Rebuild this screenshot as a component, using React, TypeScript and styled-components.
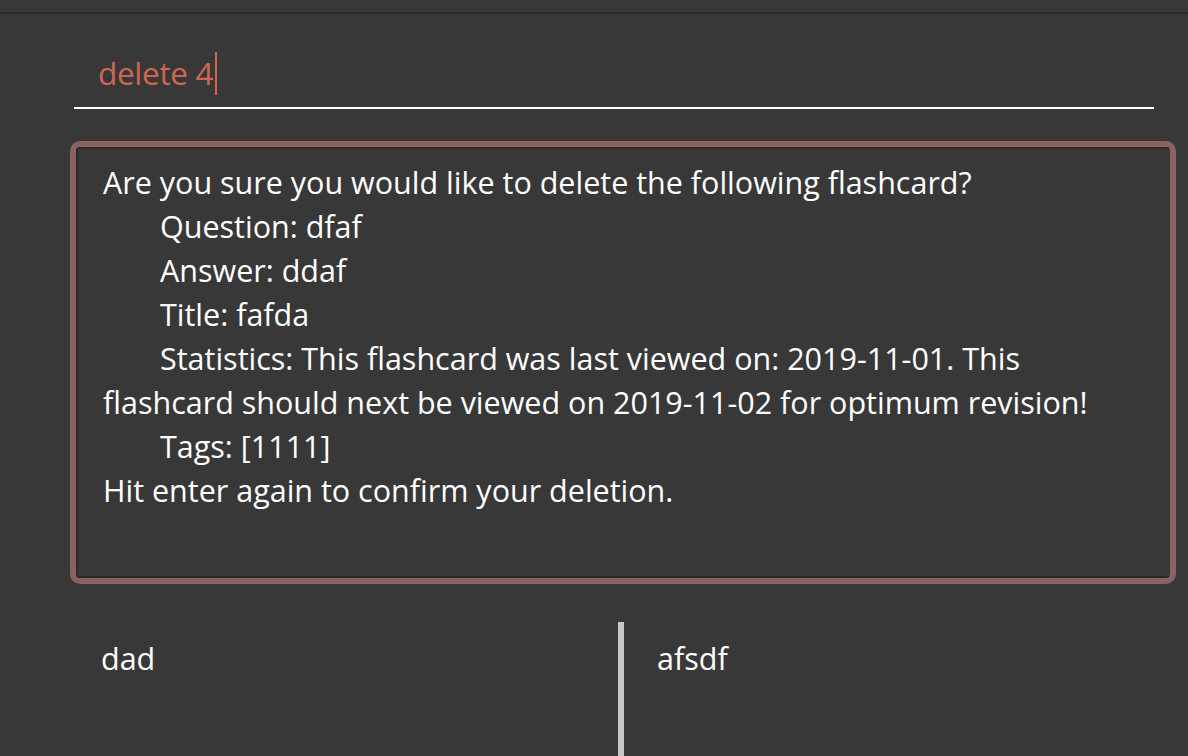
import React from "react";
import styled, { createGlobalStyle } from "styled-components";

const Global = createGlobalStyle`
  html, body { margin: 0; padding: 0; background: #383838; }
  body { font-family: "Open Sans", "Noto Sans", sans-serif; color: #ffffff; overflow: hidden; }
  #root { width: 1188px; height: 756px; }
`;

const Page = styled.div`
  width: 1188px;
  height: 756px;
  background: #383838;
  display: flex;
  flex-direction: column;
  overflow: hidden;
`;

const TopStrip = styled.div`
  height: 12px;
  border-bottom: 2px solid #2a2a2a;
  flex: none;
`;

const CommandRow = styled.div`
  margin: 0 34px 0 74px;
  height: 95px;
  border-bottom: 2px solid #ffffff;
  display: flex;
  align-items: flex-end;
  padding: 0 0 12px 24px;
  box-sizing: border-box;
  flex: none;
`;

const CommandText = styled.span`
  font-size: 31.5px;
  color: #d06550;
  line-height: 44px;
  display: inline-flex;
  align-items: center;
  letter-spacing: -0.3px;
`;

const Caret = styled.span`
  display: inline-block;
  width: 2px;
  height: 43px;
  background: #d06550;
  margin-left: 2px;
`;

const ResultBox = styled.div`
  margin: 32px 12px 0 70px;
  height: 443px;
  box-sizing: border-box;
  border: 6px solid #8c6161;
  border-radius: 10px;
  flex: none;
  overflow: hidden;
`;

const ResultInner = styled.div`
  height: 100%;
  box-sizing: border-box;
  border-top: 2px solid #2a2a2a;
  border-left: 2px solid #2a2a2a;
  border-bottom: 2px solid #2a2a2a;
  padding: 11px 20px 0 25px;
  font-size: 30.5px;
  line-height: 44px;
  color: #ffffff;
`;

const Line = styled.div<{ $indent?: boolean }>`
  padding-left: ${(p) => (p.$indent ? "57px" : "0")};
  white-space: nowrap;
`;

const Columns = styled.div`
  margin-top: 38px;
  flex: 1;
  display: grid;
  grid-template-columns: 618px 6px 1fr;
`;

const Column = styled.div<{ $pad: number }>`
  padding: 14px 0 0 ${(p) => p.$pad}px;
  font-size: 30.5px;
  line-height: 44px;
`;

const Divider = styled.div`
  background: #c8c8c8;
`;

export default function App() {
  return (
    <Page>
      <Global />
      <TopStrip />
      <CommandRow>
        <CommandText>
          delete 4<Caret />
        </CommandText>
      </CommandRow>
      <ResultBox>
        <ResultInner>
          <Line>Are you sure you would like to delete the following flashcard?</Line>
          <Line $indent>Question: dfaf</Line>
          <Line $indent>Answer: ddaf</Line>
          <Line $indent>Title: fafda</Line>
          <Line $indent>Statistics: This flashcard was last viewed on: 2019-11-01. This</Line>
          <Line>flashcard should next be viewed on 2019-11-02 for optimum revision!</Line>
          <Line $indent>Tags: [1111]</Line>
          <Line>Hit enter again to confirm your deletion.</Line>
        </ResultInner>
      </ResultBox>
      <Columns>
        <Column $pad={101}>dad</Column>
        <Divider />
        <Column $pad={33}>afsdf</Column>
      </Columns>
    </Page>
  );
}
